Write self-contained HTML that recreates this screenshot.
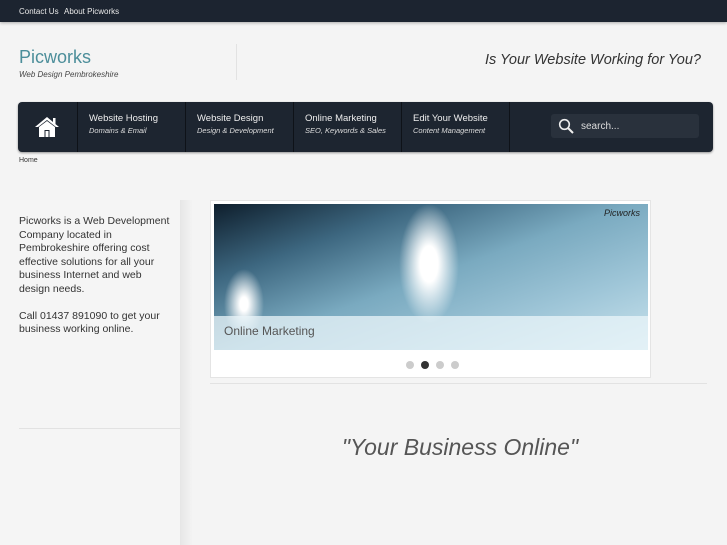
<!DOCTYPE html>
<html><head><style>
*{margin:0;padding:0;box-sizing:border-box}
body{width:727px;height:545px;overflow:hidden;background:#f4f4f4;font-family:"Liberation Sans",sans-serif;position:relative}
.top{position:absolute;left:0;top:0;width:727px;height:22px;background:#1c2430;box-shadow:0 1px 3px rgba(0,0,0,.3)}
.top span{position:absolute;top:7px;font-size:8px;color:#e8e8e8}
.logo{position:absolute;left:19px;top:47px;font-size:18px;color:#4c8e9a}
.tag{position:absolute;left:19px;top:70px;font-size:8px;font-style:italic;color:#444}
.vsep{position:absolute;left:236px;top:44px;width:1px;height:36px;background:#e2e2e2}
.slogan{position:absolute;right:26px;top:52px;font-size:14.5px;font-style:italic;color:#333}
.nav{position:absolute;left:18px;top:102px;width:695px;height:50px;background:#1d2530;border-radius:4px;box-shadow:0 1px 2px rgba(0,0,0,.4)}
.it{position:absolute;top:0;height:50px;border-right:1px solid #0e1218}
.it b{position:absolute;left:11px;top:11px;font-weight:normal;font-size:9.5px;color:#eee}
.it i{position:absolute;left:11px;top:24px;font-size:7.5px;color:#ddd;white-space:nowrap}
.srch{position:absolute;left:533px;top:12px;width:148px;height:24px;background:#29313c;border-radius:3px}
.srch span{position:absolute;left:30px;top:7px;font-size:10px;color:#ddd}
.home{position:absolute;left:19px;top:157px;font-size:7px;color:#333}
.side{position:absolute;left:0;top:200px;width:180px;height:345px;background:#f5f5f5}
.shadow{position:absolute;left:180px;top:200px;width:12px;height:345px;background:linear-gradient(90deg,#e6e6e6,#f3f3f3)}
.stext{position:absolute;left:19px;top:215px;width:156px;font-size:10.5px;line-height:13.5px;color:#333}
.hl{position:absolute;height:1px;background:#e2e2e2}
.slider{position:absolute;left:210px;top:200px;width:441px;height:178px;background:#fff;border:1px solid #e4e4e4}
.img{position:absolute;left:3px;top:3px;width:434px;height:146px;overflow:hidden;
background:radial-gradient(ellipse 30px 60px at 215px 60px,#fff 30%,rgba(255,255,255,0) 100%),radial-gradient(ellipse 20px 35px at 30px 100px,#fff 20%,rgba(255,255,255,0) 100%),linear-gradient(160deg,#0e1e2c 0%,#3d6780 25%,#7aaac0 50%,#9fc6d8 75%,#c8e2ec 100%)}
.cap{position:absolute;left:0;top:112px;width:434px;height:34px;background:rgba(235,245,250,.75)}
.cap span{position:absolute;left:10px;top:8px;font-size:12px;color:#555}
.pw{position:absolute;right:8px;top:4px;font-size:9px;font-style:italic;color:#222}
.dot{position:absolute;top:160px;width:8px;height:8px;border-radius:50%;background:#ccc}
.quote{position:absolute;left:210px;top:434px;width:500px;text-align:center;font-size:23px;font-style:italic;color:#555}
</style></head><body>
<div class="top"><span style="left:19px">Contact Us</span><span style="left:64px">About Picworks</span></div>
<div class="logo">Picworks</div>
<div class="tag">Web Design Pembrokeshire</div>
<div class="vsep"></div>
<div class="slogan">Is Your Website Working for You?</div>
<div class="nav">
<div class="it" style="left:0;width:60px"><svg style="position:absolute;left:16px;top:13px" width="26" height="23" viewBox="0 0 26 23"><path d="M1 12 L13 2 L25 12 L22 12 L13 5 L4 12Z" fill="#fff"/><rect x="19" y="3" width="2.5" height="6" fill="#fff"/><path d="M5 12 L13 6 L21 12 V22 H5Z" fill="#fff"/><rect x="10.5" y="15" width="5" height="7" fill="#1d2530"/><rect x="11.5" y="16" width="3" height="6" fill="#fff"/></svg></div>
<div class="it" style="left:60px;width:108px"><b>Website Hosting</b><i>Domains &amp; Email</i></div>
<div class="it" style="left:168px;width:108px"><b>Website Design</b><i>Design &amp; Development</i></div>
<div class="it" style="left:276px;width:108px"><b>Online Marketing</b><i>SEO, Keywords &amp; Sales</i></div>
<div class="it" style="left:384px;width:108px"><b>Edit Your Website</b><i>Content Management</i></div>
<div class="srch"><svg style="position:absolute;left:7px;top:4px" width="17" height="17" viewBox="0 0 17 17"><circle cx="6.5" cy="6.5" r="4.8" stroke="#eee" stroke-width="1.6" fill="none"/><path d="M10 10 L15 15" stroke="#eee" stroke-width="2"/></svg><span>search...</span></div>
</div>
<div class="home">Home</div>
<div class="side"></div><div class="shadow"></div>
<div class="stext">Picworks is a Web Development Company located in Pembrokeshire offering cost effective solutions for all your business Internet and web design needs.<br><br>Call 01437 891090 to get your business working online.</div>
<div class="hl" style="left:19px;top:428px;width:161px"></div>
<div class="hl" style="left:210px;top:383px;width:497px"></div>
<div class="slider"><div class="img"><div class="pw">Picworks</div><div class="cap"><span>Online Marketing</span></div></div>
<div class="dot" style="left:195px"></div><div class="dot" style="left:210px;background:#333"></div><div class="dot" style="left:225px"></div><div class="dot" style="left:240px"></div></div>
<div class="quote">"Your Business Online"</div>
</body></html>
